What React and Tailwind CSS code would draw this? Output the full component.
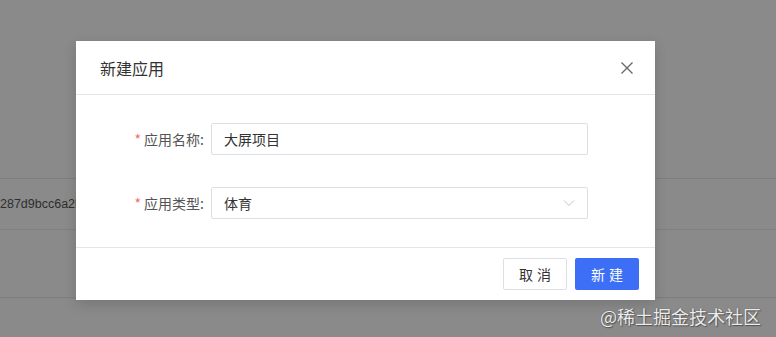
import React from "react";

const font = { fontFamily: '"Noto Sans CJK SC", "Noto Sans", sans-serif' };

export default function App() {
  return (
    <div className="relative w-full h-[337px] overflow-hidden bg-[#8a8a8a]" style={font}>
      {/* background table (behind overlay) */}
      <div className="flex flex-col pt-[178px]">
        <div className="h-[51px] border-t border-[#7e7e7e] flex items-center">
          <span className="text-[12.5px] text-[#2e2e2e]" style={{ fontFamily: '"Liberation Sans", Arial, sans-serif' }}>
            287d9bcc6a2b
          </span>
        </div>
        <div className="h-[68px] border-t border-[#808080]"></div>
        <div className="h-[40px] border-t border-[#7e7e7e]"></div>
      </div>

      {/* modal */}
      <div className="absolute left-[76px] top-[41px] w-[579px] bg-white shadow-[0_4px_12px_rgba(0,0,0,0.15)]">
        <div className="h-[54px] flex items-center justify-between pl-6 pr-[21px] border-b border-[#e5e5e5]">
          <span className="text-[16px] text-[#333]">新建应用</span>
          <svg width="14" height="14" viewBox="0 0 14 14" className="block">
            <path d="M1.5 1.5 L12.5 12.5 M12.5 1.5 L1.5 12.5" stroke="#666" strokeWidth="1.3" fill="none" />
          </svg>
        </div>
        <div className="flex flex-col gap-8 pt-7 pb-7">
          <div className="flex items-center">
            <div className="w-[135px] flex justify-end items-center text-[14px] text-[#555] pr-[7px]">
              <span className="text-[#f56c6c] mr-[3px]">*</span>
              <span>应用名称:</span>
            </div>
            <div className="w-[377px] h-[32px] border border-[#dcdfe6] rounded-[2px] flex items-center px-3 text-[14px] text-[#333]">
              大屏项目
            </div>
          </div>
          <div className="flex items-center">
            <div className="w-[135px] flex justify-end items-center text-[14px] text-[#555] pr-[7px]">
              <span className="text-[#f56c6c] mr-[3px]">*</span>
              <span>应用类型:</span>
            </div>
            <div className="w-[377px] h-[32px] border border-[#dcdfe6] rounded-[2px] flex items-center justify-between pl-3 pr-[12px] text-[14px] text-[#333]">
              <span>体育</span>
              <svg width="12" height="8" viewBox="0 0 12 8" className="block">
                <path d="M1 1.5 L6 6.5 L11 1.5" stroke="#c0c4cc" strokeWidth="1" fill="none" />
              </svg>
            </div>
          </div>
        </div>
        <div className="border-t border-[#e5e5e5] flex justify-end items-center gap-2 px-4 pt-[10px] pb-[10px]">
          <button className="w-[64px] h-[32px] border border-[#dcdfe6] rounded-[2px] bg-white text-[14px] text-[#333] tracking-[4px] pl-[4px]">
            取消
          </button>
          <button className="w-[64px] h-[32px] rounded-[2px] bg-[#3d6ff6] text-[14px] text-white tracking-[4px] pl-[4px]">
            新建
          </button>
        </div>
      </div>

      {/* watermark */}
      <div
        className="absolute left-[600px] top-[303px] text-[18px] text-[#ececec] whitespace-nowrap"
        style={{ textShadow: "0 0 1px #444, 1px 1px 1px #555" }}
      >
        @稀土掘金技术社区
      </div>
    </div>
  );
}
